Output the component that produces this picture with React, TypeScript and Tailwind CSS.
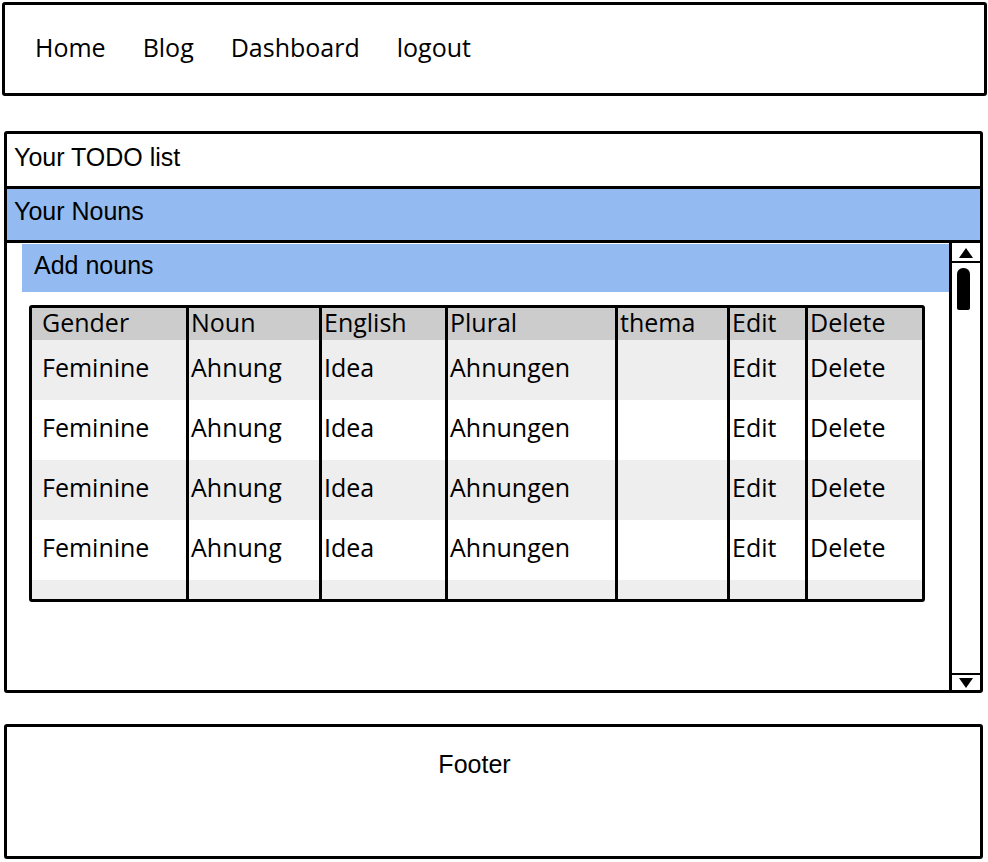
import React from "react";

const headers = ["Gender", "Noun", "English", "Plural", "thema", "Edit", "Delete"];
const rowData = ["Feminine", "Ahnung", "Idea", "Ahnungen", "", "Edit", "Delete"];
const emptyRow = ["", "", "", "", "", "", ""];

function Cell({ text, first, header, short }: { text: string; first: boolean; header?: boolean; short?: boolean }) {
  return (
    <div
      className={
        (first ? "pl-[10px] " : "border-l-[3px] border-black pl-[2px] ") +
        (header ? "h-[32px] leading-[28px] " : short ? "h-[19px] " : "h-[60px] pt-[15px] leading-[25px] ") +
        "whitespace-nowrap"
      }
    >
      {text}
    </div>
  );
}

export default function App() {
  const rows = [0, 1, 2, 3];
  const gridCols = "grid grid-cols-[154px_133px_126px_170px_112px_78px_117px] ";
  return (
    <div className="w-[988px] h-[862px] bg-white overflow-hidden flex flex-col text-black">
      {/* Header nav */}
      <div className="ml-[2px] mt-[2px] w-[985px] h-[94px] border-[3px] border-black rounded-[3px] flex items-center pl-[30px] pb-[3px] gap-[37px] text-[25px] font-['Open_Sans',sans-serif]">
        <span>Home</span>
        <span>Blog</span>
        <span>Dashboard</span>
        <span>logout</span>
      </div>

      {/* Main panel */}
      <div className="ml-[4px] mt-[35px] w-[979px] h-[562px] border-[3px] border-black rounded-[3px] flex flex-col font-['Liberation_Sans',Arial,sans-serif] text-[25px]">
        <div className="h-[55px] border-b-[3px] border-black flex items-center pl-[7px] pb-[5px] leading-[25px]">
          Your TODO list
        </div>
        <div className="h-[54px] border-b-[3px] border-black bg-[#93bbf1] flex items-center pl-[7px] pb-[6px] leading-[25px]">
          Your Nouns
        </div>
        <div className="flex-1 flex min-h-0">
          <div className="flex-1 pl-[15px] pt-[1px] flex flex-col">
            <div className="h-[48px] bg-[#93bbf1] flex items-center pl-[12px] pb-[5px] leading-[25px]">
              Add nouns
            </div>
            <div className="mt-[13px] ml-[7px] w-[896px] h-[297px] border-[3px] border-black rounded-[3px] overflow-hidden font-['Open_Sans',sans-serif] text-[25px]">
              <div className={gridCols + "bg-[#cccccc]"}>
                {headers.map((h, i) => (
                  <Cell key={i} text={h} first={i === 0} header />
                ))}
              </div>
              {rows.map((r) => (
                <div key={r} className={gridCols + (r % 2 === 0 ? "bg-[#eeeeee]" : "bg-white")}>
                  {rowData.map((t, i) => (
                    <Cell key={i} text={t} first={i === 0} />
                  ))}
                </div>
              ))}
              <div className={gridCols + "bg-[#eeeeee]"}>
                {emptyRow.map((t, i) => (
                  <Cell key={i} text={t} first={i === 0} short />
                ))}
              </div>
            </div>
          </div>
          {/* Scrollbar */}
          <div className="w-[31px] border-l-[3px] border-black flex flex-col">
            <div className="h-[20px] border-b-[2px] border-black flex items-center justify-center pt-[1px]">
              <svg width="14" height="10" viewBox="0 0 14 10">
                <polygon points="7,0 14,10 0,10" fill="black" />
              </svg>
            </div>
            <div className="ml-[5px] mt-[5px] w-[13px] h-[42px] bg-black rounded-t-[6px] rounded-b-[2px]" />
            <div className="flex-1" />
            <div className="h-[17px] border-t-[2px] border-black flex items-center justify-center">
              <svg width="14" height="10" viewBox="0 0 14 10">
                <polygon points="0,0 14,0 7,10" fill="black" />
              </svg>
            </div>
          </div>
        </div>
      </div>

      {/* Footer */}
      <div className="ml-[4px] mt-[31px] w-[979px] h-[135px] border-[3px] border-black rounded-[3px] flex justify-center pr-[38px] pt-[22px] font-['Liberation_Sans',Arial,sans-serif] text-[25px] leading-[30px]">
        <span>Footer</span>
      </div>
    </div>
  );
}
